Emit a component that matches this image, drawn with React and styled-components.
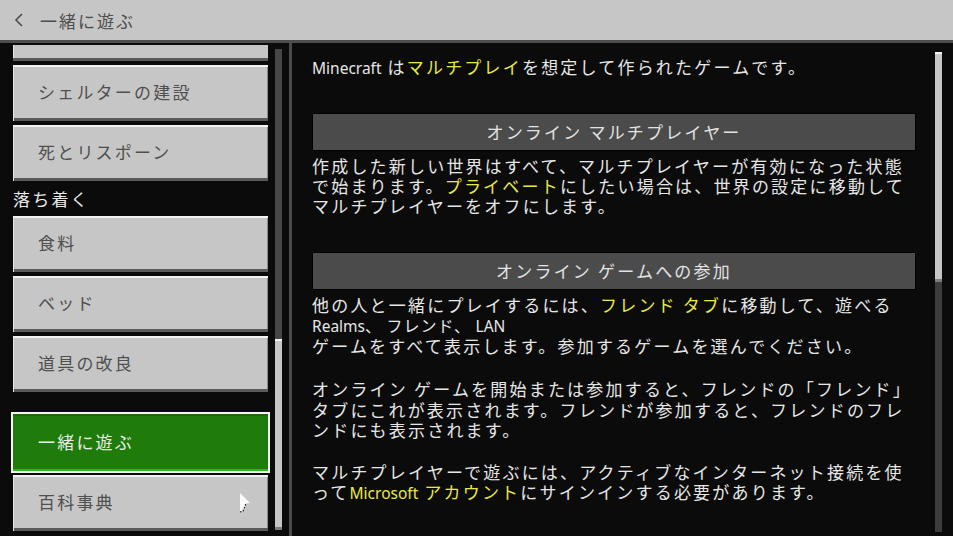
import React from "react";
import styled, { createGlobalStyle } from "styled-components";

const Global = createGlobalStyle`
  html, body { margin: 0; padding: 0; background: #0b0b0b; }
  body { font-family: "Noto Sans CJK JP", "Noto Sans", sans-serif; }
`;

const Page = styled.div`
  width: 953px;
  height: 536px;
  display: flex;
  flex-direction: column;
  overflow: hidden;
  background: #0b0b0b;
`;

const TopBar = styled.header`
  height: 40px;
  flex: none;
  background: #c6c6c6;
  border-bottom: 3px solid #4e4e4e;
  display: flex;
  align-items: center;
  padding-left: 14px;
  gap: 16px;
  color: #4d4d4d;
  font-size: 17px;
  letter-spacing: 2px;
`;

const Body = styled.div`
  flex: 1;
  display: flex;
  min-height: 0;
`;

const Sidebar = styled.aside`
  flex: none;
  border-right: 3px solid #4a4a4a;
  display: flex;
  padding-left: 13px;
  box-sizing: border-box;
  width: 292px;
  overflow: hidden;
`;

const List = styled.div`
  width: 255px;
  display: flex;
  flex-direction: column;
  gap: 4px;
  padding-top: 2px;
`;

const Item = styled.div`
  position: relative;
  flex: none;
  height: ${(p) => (p.$partial ? "16px" : "56px")};
  box-sizing: border-box;
  display: flex;
  align-items: center;
  padding-left: 25px;
  padding-bottom: 3px;
  font-size: 17px;
  letter-spacing: 2.2px;
  color: #4f4f4f;
  background: #c6c6c6;
  box-shadow: ${(p) =>
    p.$partial
      ? "inset 0 -3px 0 #5a5a5a, inset 1px 0 0 #e6e6e6"
      : "inset 0 2px 0 #f2f2f2, inset 1px 0 0 #e6e6e6, inset 0 -3px 0 #5a5a5a, inset -1px 0 0 #8a8a8a"};
`;

const ActiveItem = styled(Item)`
  margin-top: 18px;
  height: 57px;
  background: #1f7c0b;
  color: #ececec;
  outline: 2px solid #f4f4f4;
  box-shadow: inset 0 -2px 0 #2fb81b, inset 0 2px 0 #1a6a08;
`;

const Category = styled.div`
  height: 27px;
  display: flex;
  align-items: center;
  color: #ececec;
  font-size: 17px;
  letter-spacing: 2.2px;
`;

const Cursor = styled.svg`
  position: absolute;
  right: 17px;
  top: 17px;
`;

const Track = styled.div`
  width: 7px;
  flex: none;
  background: ${(p) => p.$bg};
  display: flex;
  flex-direction: column;
  justify-content: ${(p) => (p.$end ? "flex-end" : "flex-start")};
  margin-top: ${(p) => p.$top}px;
  margin-bottom: ${(p) => p.$bottom}px;
  margin-left: ${(p) => p.$left}px;
`;

const Thumb = styled.div`
  height: ${(p) => p.$h}px;
  background: #c6c6c6;
  box-shadow: inset 0 2px 0 #f4f4f4, inset 0 -3px 0 #7c7c7c;
`;

const Main = styled.main`
  flex: 1;
  display: flex;
  min-width: 0;
`;

const Content = styled.div`
  width: 604px;
  flex: none;
  padding: 14px 0 0 20px;
  color: #e6e6e6;
  font-size: 17px;
  letter-spacing: 2.2px;
  line-height: 20px;
  white-space: nowrap;
`;

const Para = styled.p`
  margin: ${(p) => p.$mt || 0}px 0 0;
  line-height: ${(p) => p.$lh || 20}px;
`;

const SectionHead = styled.div`
  margin-top: ${(p) => p.$mt}px;
  height: 38px;
  box-sizing: border-box;
  border: 1px solid #000;
  background: #4b4b4b;
  display: flex;
  align-items: center;
  justify-content: center;
  color: #e2e2e2;
  margin-bottom: 5px;
`;

const Hi = styled.span`
  color: #e9e946;
`;

const Latin = styled.span`
  font-family: "Noto Sans", sans-serif;
  letter-spacing: 0;
  font-size: 15.5px;
  color: ${(p) => (p.$hi ? "#e9e946" : "inherit")};
`;

const PlainLine = styled.span`
  font-size: 16px;
  letter-spacing: 1px;
`;

export default function App() {
  return (
    <Page>
      <Global />
      <TopBar>
        <svg width="10" height="14" viewBox="0 0 10 14">
          <polyline points="8,1 2,7 8,13" fill="none" stroke="#4d4d4d" strokeWidth="1.6" />
        </svg>
        <span>一緒に遊ぶ</span>
      </TopBar>
      <Body>
        <Sidebar>
          <List>
            <Item $partial />
            <Item>シェルターの建設</Item>
            <Item>死とリスポーン</Item>
            <Category>落ち着く</Category>
            <Item>食料</Item>
            <Item>ベッド</Item>
            <Item>道具の改良</Item>
            <ActiveItem>一緒に遊ぶ</ActiveItem>
            <Item>
              百科事典
              <Cursor width="12" height="21" viewBox="0 0 12 21">
                <path d="M1 1 L11 11 L7 11.5 L4 19 L1 20 Z" fill="#fafafa" />
                <path d="M1 20 L4 19 L7 11.5" fill="none" stroke="#111" strokeWidth="1.2" strokeDasharray="1.5 1.5" />
              </Cursor>
            </Item>
          </List>
          <Track $bg="#474747" $top={6} $bottom={6} $left={7} $end>
            <Thumb $h={191} />
          </Track>
        </Sidebar>
        <Main>
          <Content>
            <Para>
              <Latin>Minecraft</Latin> は<Hi>マルチプレイ</Hi>を想定して作られたゲームです。
            </Para>
            <SectionHead $mt={35}>オンライン マルチプレイヤー</SectionHead>
            <Para>
              作成した新しい世界はすべて、マルチプレイヤーが有効になった状態
              <br />
              で始まります。<Hi>プライベート</Hi>にしたい場合は、世界の設定に移動して
              <br />
              マルチプレイヤーをオフにします。
            </Para>
            <SectionHead $mt={36}>オンライン ゲームへの参加</SectionHead>
            <Para>
              他の人と一緒にプレイするには、<Hi>フレンド タブ</Hi>に移動して、遊べる
              <br />
              <PlainLine>
                <Latin>Realms</Latin>、 フレンド、 <Latin>LAN</Latin>
              </PlainLine>
              <br />
              ゲームをすべて表示します。参加するゲームを選んでください。
            </Para>
            <Para $mt={23} $lh={20.5}>
              オンライン ゲームを開始または参加すると、フレンドの「フレンド」
              <br />
              タブにこれが表示されます。フレンドが参加すると、フレンドのフレ
              <br />
              ンドにも表示されます。
            </Para>
            <Para $mt={21}>
              マルチプレイヤーで遊ぶには、アクティブなインターネット接続を使
              <br />
              って<Latin $hi>Microsoft</Latin> <Hi>アカウント</Hi>にサインインする必要があります。
            </Para>
          </Content>
          <Track $bg="#3c3c3c" $top={9} $bottom={4} $left={19}>
            <Thumb $h={230} />
          </Track>
        </Main>
      </Body>
    </Page>
  );
}
